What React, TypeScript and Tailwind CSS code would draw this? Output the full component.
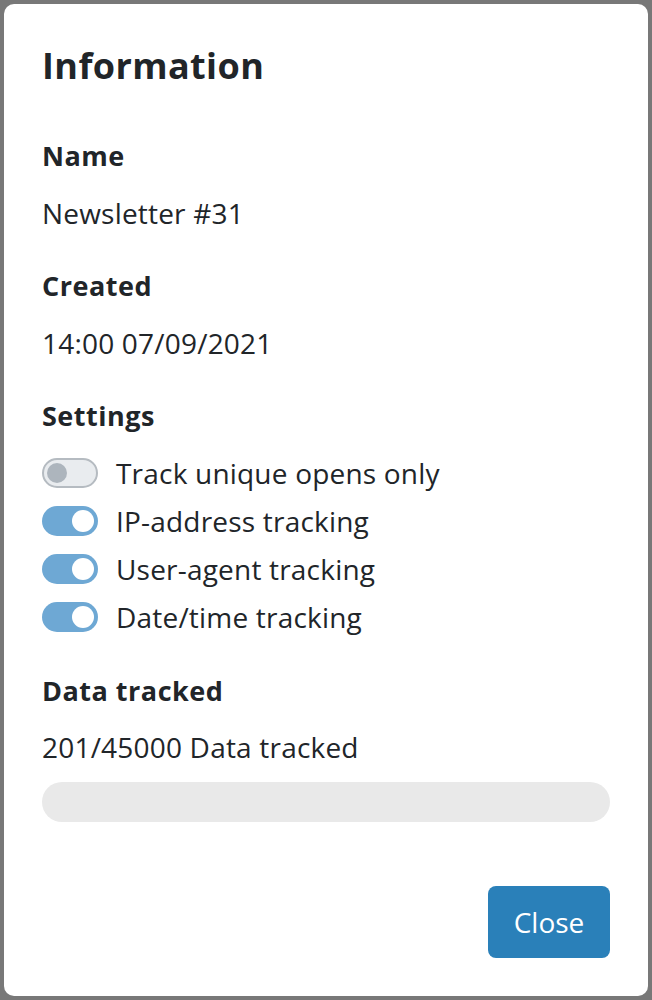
const settings = [
  { label: "Track unique opens only", on: false },
  { label: "IP-address tracking", on: true },
  { label: "User-agent tracking", on: true },
  { label: "Date/time tracking", on: true },
];

const Toggle = ({ on }: { on: boolean }) => {
  if (on) {
    return (
      <div className="w-[56px] h-[30px] rounded-full bg-[#6ea8d4] flex items-center justify-end pr-[4px]">
        <div className="w-[22px] h-[22px] rounded-full bg-white" />
      </div>
    );
  }
  return (
    <div className="w-[56px] h-[30px] rounded-full bg-[#e9ecef] border-2 border-[#b5bbc1] flex items-center pl-[3px]">
      <div className="w-[20px] h-[20px] rounded-full bg-[#adb5bd]" />
    </div>
  );
};

const label = "text-[27px] leading-[36px] font-bold tracking-[0.5px]";
const value = "text-[28px] leading-[36px] tracking-[0.2px]";

export default function App() {
  return (
    <div className="min-h-screen bg-[#787878] p-1 font-['Open_Sans',sans-serif]">
      <div className="h-[992px] bg-white rounded-[10px] px-[38px] pt-[40px] pb-[38px] flex flex-col text-[#212529]">
        <h1 className="text-[36px] leading-[44px] font-bold tracking-[0.4px]">Information</h1>

        <h2 className={`mt-[50px] ${label}`}>Name</h2>
        <p className={`mt-[21px] ${value}`}>Newsletter #31</p>

        <h2 className={`mt-[37px] ${label}`}>Created</h2>
        <p className={`mt-[21px] ${value}`}>14:00 07/09/2021</p>

        <h2 className={`mt-[37px] ${label}`}>Settings</h2>
        <div className="mt-[15px] flex flex-col">
          {settings.map((s) => (
            <div key={s.label} className="h-[48px] flex items-center gap-[18px]">
              <Toggle on={s.on} />
              <span className={value}>{s.label}</span>
            </div>
          ))}
        </div>

        <h2 className={`mt-[32px] ${label}`}>Data tracked</h2>
        <p className={`mt-[20px] ${value}`}>201/45000 Data tracked</p>
        <div className="mt-[17px] h-[40px] w-full rounded-full bg-[#e9e9e9]" />

        <div className="mt-[64px] flex justify-end">
          <button className="w-[122px] h-[72px] rounded-[8px] bg-[#2a80b9] text-white text-[28px]">Close</button>
        </div>
      </div>
    </div>
  );
}
